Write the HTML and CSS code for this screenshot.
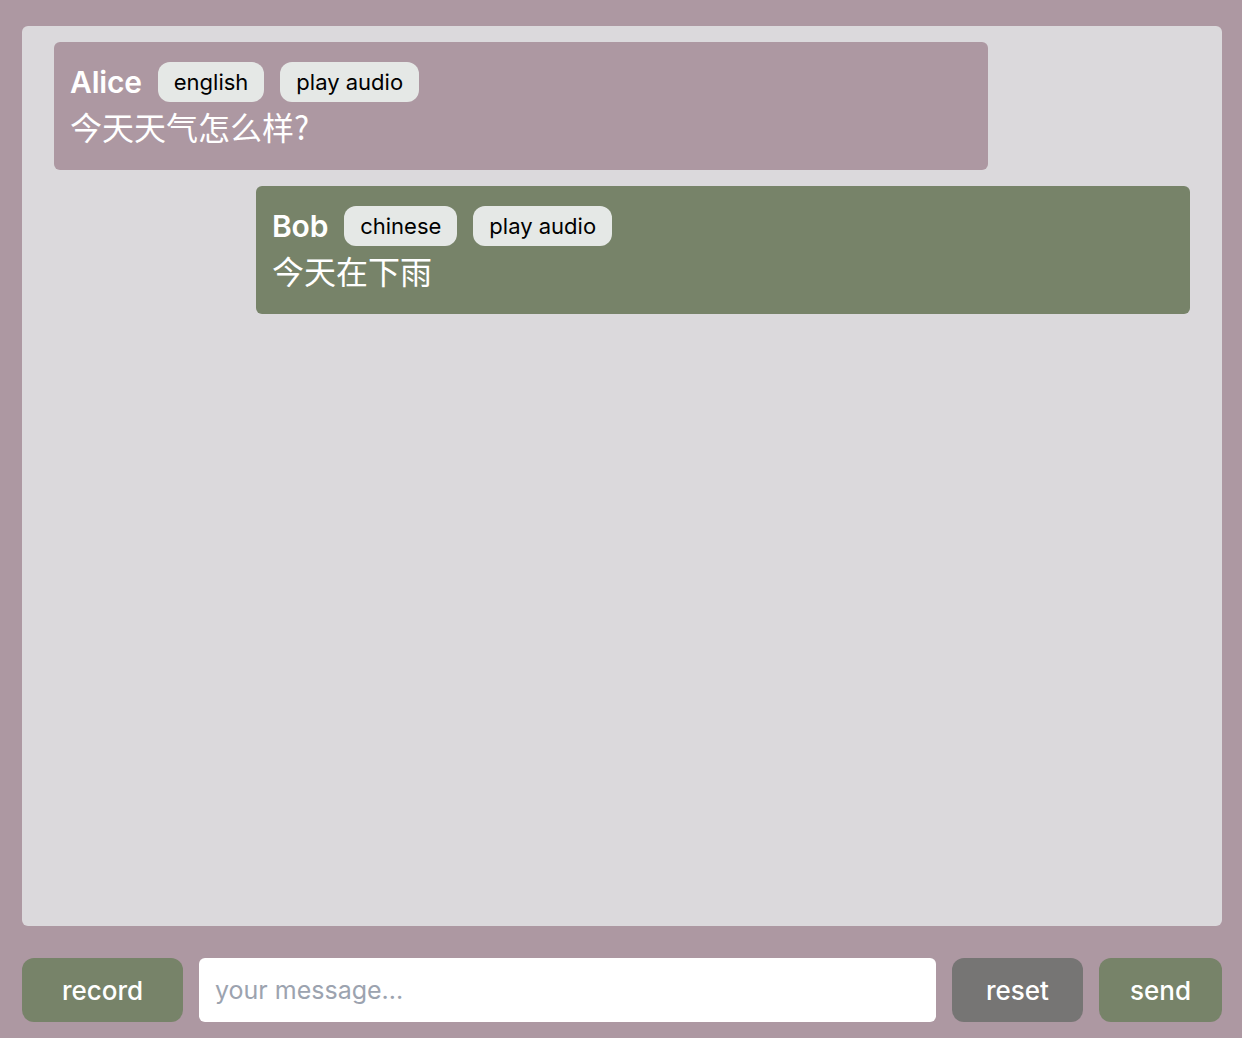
FILE: index.html
```html
<!DOCTYPE html>
<html lang="en">
<head>
    <meta charset="UTF-8">
    <meta name="viewport" content="width=device-width, initial-scale=1.0">
    <title>Chat</title>
    <link rel="stylesheet" href="styles.css">
</head>
<body>
    <main class="chat">
        <div class="msg msg-left">
            <div class="msg-head">
                <span class="name">Alice</span>
                <span class="pill">english</span>
                <button class="pill">play audio</button>
            </div>
            <p class="text">今天天气怎么样?</p>
        </div>
        <div class="msg msg-right">
            <div class="msg-head">
                <span class="name">Bob</span>
                <span class="pill">chinese</span>
                <button class="pill">play audio</button>
            </div>
            <p class="text">今天在下雨</p>
        </div>
    </main>

    <footer class="bar">
        <button class="btn btn-green btn-record">record</button>
        <input class="input" type="text" placeholder="your message...">
        <button class="btn btn-gray btn-reset">reset</button>
        <button class="btn btn-green btn-send">send</button>
    </footer>
</body>
</html>
```

FILE: styles.css
```css
* {
    box-sizing: border-box;
}
html, body {
    height: 100%;
}
body {
    margin: 0;
    padding: 26px 20px 16px 22px;
    background: #ad98a2;
    font-family: Inter, "Noto Sans CJK SC", sans-serif;
    display: flex;
    flex-direction: column;
    gap: 32px;
}
.chat {
    height: 900px;
    background: #dbd9dc;
    border-radius: 6px;
    padding: 16px 32px;
    display: flex;
    flex-direction: column;
    gap: 16px;
}
.msg {
    width: 934px;
    border-radius: 6px;
    padding: 20px 16px;
    color: #fff;
}
.msg-left {
    background: #ad98a2;
}
.msg-right {
    background: #778369;
    align-self: flex-end;
}
.msg-head {
    display: flex;
    align-items: center;
    gap: 16px;
    height: 40px;
}
.name {
    font-size: 30px;
    font-weight: 600;
    letter-spacing: -0.2px;
}
.pill {
    height: 40px;
    padding: 0 16px;
    border: none;
    border-radius: 12px;
    background: #e5e8e6;
    color: #000;
    font-family: inherit;
    font-size: 22px;
    display: flex;
    align-items: center;
}
.text {
    margin: 0;
    font-size: 32px;
    line-height: 48px;
    font-family: "Noto Sans CJK SC", sans-serif;
}
.bar {
    height: 64px;
    display: flex;
    gap: 16px;
}
.btn {
    border: none;
    border-radius: 12px;
    color: #fff;
    font-family: inherit;
    font-size: 26px;
    font-weight: 500;
}
.btn-green {
    background: #778369;
}
.btn-gray {
    background: #767574;
}
.btn-record {
    width: 161px;
}
.btn-reset {
    width: 131px;
}
.btn-send {
    width: 123px;
}
.input {
    flex: 1;
    border: none;
    border-radius: 6px;
    background: #fff;
    padding: 0 16px;
    font-family: inherit;
    font-size: 25px;
    outline: none;
}
.input::placeholder {
    color: #9ca3af;
}
```
